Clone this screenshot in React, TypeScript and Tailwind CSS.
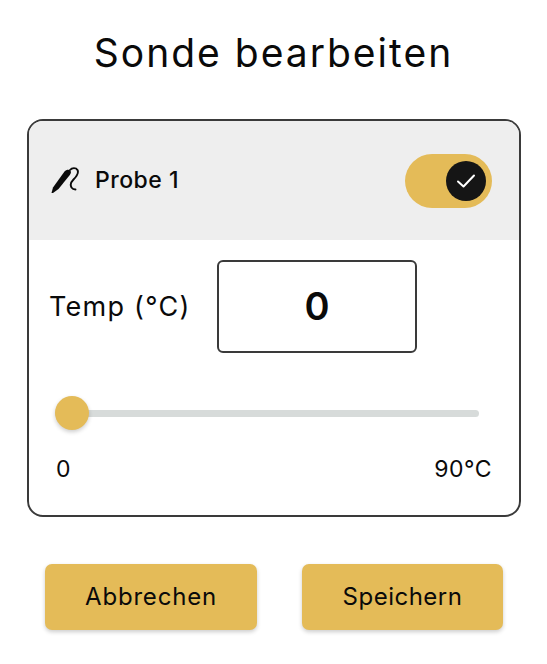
export default function App() {
  return (
    <div className="w-[547px] h-[664px] bg-white font-['Inter','Liberation_Sans',sans-serif] text-[#0a0a0a] flex flex-col overflow-hidden">
      <h1 className="h-[119px] pt-[28px] text-center text-[39px] leading-[50px] font-normal tracking-[2px]">Sonde bearbeiten</h1>
      <div className="mx-[27px] w-[494px] h-[398px] rounded-[16px] border-2 border-[#3a3a3a] overflow-hidden flex flex-col">
        <div className="h-[119px] bg-[#eeeeee] flex items-center justify-between pl-[22px] pr-[27px]">
          <div className="flex items-center gap-[16px]">
            <svg width="28" height="27" viewBox="0 0 28 27" fill="none">
              <path d="M0.5 26 L2 20.5 L13.5 4.5 C15 2.8 17.5 2.3 19 3.3 C20.5 4.6 20 6.5 18.8 8 L7.5 22 L2 26 Z" fill="#0a0a0a" />
              <path d="M19 3 C21 0.5 25 0.5 26.5 3 C28 6 25 10 22.5 12.5 C20 15 19 18 20.5 20.5 C21.5 22 23 22.5 24.5 22.5" stroke="#0a0a0a" strokeWidth="1.9" strokeLinecap="round" />
            </svg>
            <span className="text-[23px] font-medium leading-none tracking-[0.5px]">Probe 1</span>
          </div>
          <div className="w-[87px] h-[54px] rounded-full bg-[#e4bb58] flex items-center justify-end pr-[6px]">
            <div className="w-[40px] h-[40px] rounded-full bg-[#151515] flex items-center justify-center">
              <svg width="20" height="16" viewBox="0 0 20 16" fill="none">
                <path d="M2 8.5 L7.5 13.5 L18 2.5" stroke="#fff" strokeWidth="2" strokeLinecap="round" strokeLinejoin="round" />
              </svg>
            </div>
          </div>
        </div>
        <div className="flex-1 flex flex-col pl-[20px] pr-[21px]">
          <div className="flex items-center gap-[29px] mt-[20px]">
            <span className="text-[27px] leading-none tracking-[1.25px] w-[139px] whitespace-nowrap">Temp (°C)</span>
            <div className="w-[200px] h-[93px] rounded-[6px] border-2 border-[#3a3a3a] flex items-center justify-center text-[38px] font-semibold">0</div>
          </div>
          <div className="mt-[43px] h-[34px] flex items-center relative ml-[6px] mr-[19px]">
            <div className="w-full h-[7px] rounded-full bg-[#d7dbda]" />
            <div className="absolute left-0 w-[34px] h-[34px] rounded-full bg-[#e4bb58] shadow-[0_2px_4px_rgba(0,0,0,0.2)]" />
          </div>
          <div className="mt-[24px] flex justify-between pl-[7px] pr-[6px] text-[23px] leading-[30px]">
            <span>0</span>
            <span className="tracking-[0.5px]">90°C</span>
          </div>
        </div>
      </div>
      <div className="flex justify-between pl-[45px] pr-[44px] mt-[47px]">
        <button className="w-[212px] h-[66px] rounded-[7px] bg-[#e4bb58] text-[24px] shadow-[0_2px_4px_rgba(0,0,0,0.2)] tracking-[0.8px]">Abbrechen</button>
        <button className="w-[201px] h-[66px] rounded-[7px] bg-[#e4bb58] text-[24px] shadow-[0_2px_4px_rgba(0,0,0,0.2)] tracking-[0.5px]">Speichern</button>
      </div>
    </div>
  );
}
